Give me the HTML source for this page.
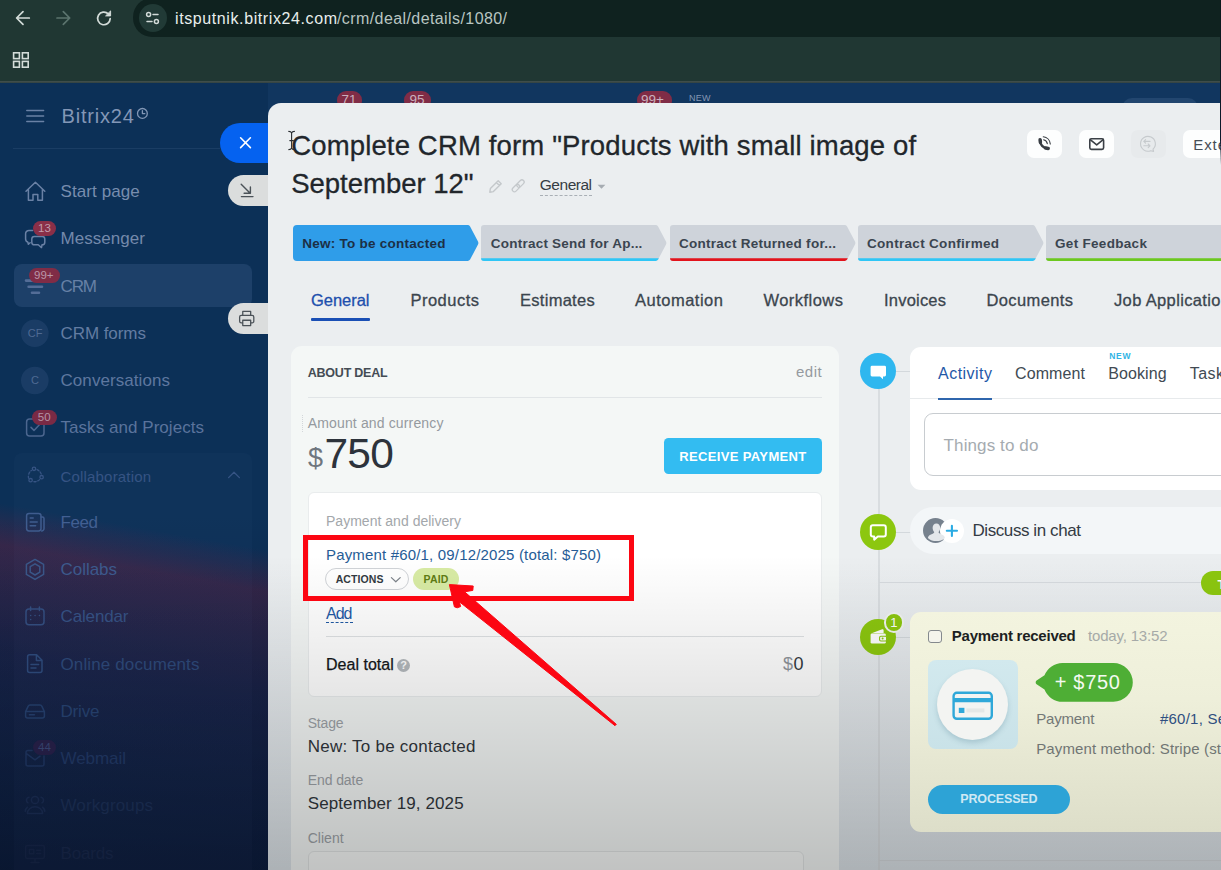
<!DOCTYPE html>
<html lang="en">
<head>
<meta charset="utf-8">
<title>Deal #1080 - Bitrix24</title>
<style>
*{box-sizing:border-box;margin:0;padding:0}
html,body{width:1221px;height:870px;overflow:hidden;background:#0c3057;font-family:"Liberation Sans",sans-serif}
.abs,.layer,.t,.b{position:absolute}
.layer{left:0;top:0;width:1221px;height:870px;overflow:hidden}
.t{white-space:pre;line-height:1;font-family:"Liberation Sans",sans-serif}
svg{position:absolute;overflow:visible}
/* ---------- browser chrome ---------- */
#chrome{height:83px;background:#203733;z-index:50}
#chrome .edge{left:0;top:81.2px;width:1221px;height:1.8px;background:linear-gradient(180deg,#3f4d4a 0,#3f4d4a 60%,#26383a 100%)}
#url{left:133px;top:-2px;width:1120px;height:39.4px;border-radius:19px;background:#0f221f}
#url .site{left:5.5px;top:6px;width:28px;height:28px;border-radius:14px;background:#213a36}
/* ---------- sidebar ---------- */
#side{top:0;background:#0c3057}
#sidebg{left:0;top:83px;width:268px;height:787px;background:
  linear-gradient(180deg,rgba(13,28,62,0) 55%,rgba(12,24,56,.8) 100%),
  linear-gradient(190deg,rgba(60,36,70,0) 56%,rgba(64,38,72,.85) 61%,rgba(44,32,72,.55) 74%,rgba(20,28,62,0) 98%),
  #0c3057}
#stripbg{left:268px;top:83px;width:953px;height:30px;background:#11365f}
.navact{left:14px;top:264px;width:238px;height:43px;border-radius:8px;background:rgba(120,150,200,.16)}
.navgrp{left:14px;top:453px;width:238px;height:430px;border-radius:8px;background:rgba(120,150,200,.035)}
.sdiv{left:13px;top:147.5px;width:207px;height:1px;background:rgba(130,155,195,.12)}
.badge{height:15px;border-radius:8px;background:#8a2f48}
.lbl{border-radius:16px 0 0 16px}
/* ---------- slider panel ---------- */
#panel{left:268px;top:103.4px;width:953px;height:767px;background:linear-gradient(180deg,#ebeef0 0,#ebeef0 60%,#dde4e9 100%);border-top-left-radius:13px;overflow:hidden}
.hbtn{top:129.9px;width:35px;height:28.5px;border-radius:7px;background:#fdfefe}
.stage{top:225px;height:36px;width:185.5px}
.card{background:#f4f7f6;border-radius:11px}
.inner{background:#fff;border:1px solid #e9eced;border-radius:6px}
.hr{height:1px;background:#e1e5e7}
.pill{border-radius:40px}
.circ{border-radius:50%}
#fade{z-index:40;pointer-events:none;top:83px;height:787px;background:linear-gradient(180deg,rgba(0,0,0,0) 60%,rgba(0,0,0,.22) 100%)}
</style>
</head>
<body>

<!-- ================= page: sidebar ================= -->
<div class="layer" id="side">
  <div class="b" id="sidebg"></div>
  <div class="b" id="stripbg"></div>
  <div class="b sdiv"></div>
  <div class="b navact"></div>
  <div class="b navgrp"></div>
  <svg style="left:0;top:0;width:268px;height:870px" viewBox="0 0 268 870" fill="none" stroke="#6a81a5" stroke-width="1.5" stroke-linecap="round" stroke-linejoin="round">
  <!-- hamburger + clock -->
  <path d="M26.8 110.6h16.8M26.8 116.1h16.8M26.8 121.6h16.8"/>
  <g stroke="#8397b6" stroke-width="1.3"><circle cx="142.4" cy="113.4" r="4.9"/><path d="M142.4 110.6v3h2.4"/></g>
  <!-- home -->
  <path d="M26 191.2l9.4-9 9.4 9M28.4 189.4v10.8h4.6v-5.6h4.8v5.6h4.6v-10.8"/>
  <!-- messenger -->
  <path d="M32.6 230.4h-3.600a3.400 3.400 0 0 0-3.400 3.400v5.200a3.400 3.400 0 0 0 2.300 3.200l.5 2 1.700-1.500"/><path d="M34.400 236.400h7.800a2.600 2.600 0 0 1 2.600 2.600v3.200a2.600 2.600 0 0 1-2.600 2.600h-.2l-.5 2.800-3.300-2.800h-3.800a2.600 2.600 0 0 1-2.600-2.600v-3.200a2.600 2.600 0 0 1 2.600-2.600z"/>
  <!-- CRM funnel -->
  <g stroke-width="2.6" stroke="#546d97"><path d="M26 280.6h18M28.600 286.700h13.400M32 292.800h7"/></g>
  <!-- CF / C circles -->
  <g stroke="none" fill="rgba(120,150,200,.13)"><circle cx="34.800" cy="333.300" r="13.800"/><circle cx="34.800" cy="380.500" r="13.800"/></g>
  <!-- tasks -->
  <g stroke="#4c668f"><rect x="26.600" y="419" width="17.400" height="17" rx="3"/><path d="M31 427.400l3 3 5.600-5.800"/></g>
  <!-- collaboration -->
  <g stroke="#365484" stroke-width="1.300"><circle cx="34" cy="468.800" r="1.700"/><circle cx="41.600" cy="477.200" r="1.700"/><circle cx="30.600" cy="480.200" r="1.700"/><path d="M37 469.600a7.500 7.500 0 0 1 4.400 5M39.600 479.600a7.500 7.500 0 0 1-6.600 2M28.600 478.200a7.500 7.500 0 0 1 2.800-7.800" stroke-dasharray="2.200 1.800"/></g>
  <!-- feed -->
  <g stroke="#3f5c8e"><rect x="26.600" y="513.400" width="14.400" height="17.600" rx="2.400"/><path d="M41 517h1.400a1.600 1.600 0 0 1 1.600 1.600v10a2.400 2.400 0 0 1-2.400 2.400M30.200 518h3M30.200 522h7M30.200 525.800h5.400"/></g>
  <!-- collabs -->
  <g stroke="#3a5789"><path d="M35 559.400l8.600 5v10l-8.600 5-8.600-5v-10z"/><path d="M35 563.800l4.800 2.800v5.600l-4.800 2.800-4.800-2.800v-5.600z"/></g>
  <!-- calendar -->
  <g stroke="#344f81"><rect x="26" y="609" width="18" height="15.800" rx="3"/><path d="M30.600 607v3.400M39.400 607v3.400M30.600 615.400h.1M35 615.400h.1M39.400 615.400h.1M30.600 619.400h.1" /></g>
  <!-- online docs -->
  <g stroke="#2f4c7e"><path d="M29.600 654.800h7l5.400 5.400v10.400a2 2 0 0 1-2 2H29.600a2 2 0 0 1-2-2v-13.800a2 2 0 0 1 2-2zM36.400 655v5.400h5.400M31 664.400h7.600M31 668h5"/></g>
  <!-- drive -->
  <g stroke="#264170"><path d="M25.600 711.600l2.600-5.400a2 2 0 0 1 1.800-1.200h10a2 2 0 0 1 1.800 1.200l2.600 5.400v4.400a2 2 0 0 1-2 2H27.600a2 2 0 0 1-2-2zM25.800 711.600h18.400M29.400 714.800h5"/></g>
  <!-- webmail -->
  <g stroke="#203764"><path d="M32 750.400h-4a2 2 0 0 0-2 2v11.600a2 2 0 0 0 2 2h14a2 2 0 0 0 2-2v-8M26.400 753.600l8.600 6.200 5-3.600"/></g>
  <!-- workgroups -->
  <g stroke="#1b2e56"><circle cx="35" cy="800" r="3.600"/><path d="M27.400 813.400a7.600 6.600 0 0 1 15.200 0zM41 797.200a3 3 0 0 1 1 5.600M44.800 811.400a6 6 0 0 0-2.200-4.200M29 797.200a3 3 0 0 0-1 5.600M25.200 811.400a6 6 0 0 1 2.200-4.200"/></g>
  <!-- boards -->
  <g stroke="#17274b"><rect x="25.600" y="845.600" width="18.800" height="12.800" rx="1.600"/><path d="M35 858.400v3.600M31 862.600h8M29.400 849.400h4.400v4.400h-4.400zM36.600 850.200h4M36.600 853.400h4"/></g>
  <!-- collaboration chevron -->
  <path d="M228.600 477.600l5.400-5.400 5.400 5.400" stroke="#365484" stroke-width="1.300"/>
</svg>

  <div class="b badge" style="left:32.5px;top:220.7px;width:23.5px;height:15.6px"></div>
  <div class="b badge" style="left:29.3px;top:267.8px;width:30.5px;height:15.2px;background:#802c46"></div>
  <div class="b badge" style="left:31.6px;top:410.3px;width:25.4px;height:15px;background:#7a2a45"></div>
  <div class="b badge" style="left:32.5px;top:740px;width:23.5px;background:#28214c"></div>
  <span class="t" style="left:61.5px;top:106.1px;font-size:20px;color:#8397b6;letter-spacing:0.80px;">Bitrix24</span>
<span class="t" style="left:60.5px;top:183.0px;font-size:17px;color:#788dae;letter-spacing:0.09px;">Start page</span>
<span class="t" style="left:60.5px;top:230.0px;font-size:17px;color:#7489ab;letter-spacing:0.05px;">Messenger</span>
<span class="t" style="left:60.5px;top:277.5px;font-size:17px;color:#6780a6;letter-spacing:-1.11px;">CRM</span>
<span class="t" style="left:60.5px;top:325.0px;font-size:17px;color:#637ca2;letter-spacing:-0.06px;">CRM forms</span>
<span class="t" style="left:60.5px;top:372.0px;font-size:17px;color:#5e779f;letter-spacing:0.07px;">Conversations</span>
<span class="t" style="left:60.5px;top:419.0px;font-size:17px;color:#5a739c;letter-spacing:0.05px;">Tasks and Projects</span>
<span class="t" style="left:60.5px;top:468.7px;font-size:15px;color:#365484;letter-spacing:0.18px;">Collaboration</span>
<span class="t" style="left:60.5px;top:514.0px;font-size:17px;color:#425f92;letter-spacing:-0.42px;">Feed</span>
<span class="t" style="left:60.5px;top:561.0px;font-size:17px;color:#3d5a8d;letter-spacing:-0.03px;">Collabs</span>
<span class="t" style="left:60.5px;top:608.0px;font-size:17px;color:#365285;letter-spacing:-0.14px;">Calendar</span>
<span class="t" style="left:60.5px;top:655.5px;font-size:17px;color:#2e4a7b;letter-spacing:0.13px;">Online documents</span>
<span class="t" style="left:60.5px;top:703.0px;font-size:17px;color:#284474;letter-spacing:-0.17px;">Drive</span>
<span class="t" style="left:60.5px;top:750.0px;font-size:17px;color:#223a68;letter-spacing:-0.05px;">Webmail</span>
<span class="t" style="left:60.5px;top:797.0px;font-size:17px;color:#1d3159;letter-spacing:0.13px;">Workgroups</span>
<span class="t" style="left:60.5px;top:845.0px;font-size:17px;color:#19294e;letter-spacing:-0.17px;">Boards</span>
<span class="t" style="left:38.1px;top:223.3px;font-size:11.5px;color:#c39dac;">13</span>
<span class="t" style="left:34.0px;top:269.9px;font-size:11.5px;color:#bb97a8;">99+</span>
<span class="t" style="left:37.8px;top:411.9px;font-size:11.5px;color:#b592a5;">50</span>
<span class="t" style="left:38.0px;top:741.9px;font-size:11.5px;color:#3c4a7a;">44</span>
<span class="t" style="left:27.8px;top:328.0px;font-size:11px;color:#4f6a93;">CF</span>
<span class="t" style="left:30.9px;top:375.2px;font-size:11px;color:#4f6a93;">C</span>
  <!-- strip behind the slider -->
  <div class="b badge" style="left:337px;top:91.4px;width:24.5px;height:19px;border-radius:9px;background:#802c46"></div>
  <div class="b badge" style="left:404px;top:91.4px;width:27px;height:19px;border-radius:9px;background:#802c46"></div>
  <div class="b badge" style="left:636.7px;top:91.4px;width:35px;height:19px;border-radius:9px;background:#802c46"></div>
  <div class="b" style="left:1122px;top:97.7px;width:76px;height:30px;border-radius:10px;background:#22466f"></div>
  <span class="t" style="left:341.6px;top:93.4px;font-size:13.5px;color:#cbb0bd;">71</span>
<span class="t" style="left:409.6px;top:93.4px;font-size:13.5px;color:#cbb0bd;">95</span>
<span class="t" style="left:641.0px;top:93.4px;font-size:13.5px;color:#cbb0bd;">99+</span>
<span class="t" style="left:689.0px;top:94.4px;font-size:9px;color:#8497b4;letter-spacing:0.25px;">NEW</span>
  <!-- slider labels -->
  <div class="b lbl" style="left:219.6px;top:123px;width:60px;height:39.8px;border-radius:20px 0 0 20px;background:#0562f0"></div>
  <div class="b lbl" style="left:227.5px;top:174.7px;width:50px;height:31.2px;background:#dbdddd"></div>
  <div class="b lbl" style="left:227.5px;top:302.9px;width:50px;height:31px;background:#dbdddd"></div>
  <svg style="left:0;top:0;width:268px;height:400px" viewBox="0 0 268 400" fill="none" stroke-linecap="round" stroke-linejoin="round">
  <path d="M240.6 137.8l9.8 9.8M250.4 137.8l-9.8 9.8" stroke="#fff" stroke-width="1.6"/>
  <g stroke="#4b5258" stroke-width="1.4">
    <path d="M241.2 184.2l9 9M250.4 187v6.3h-6.3M241.4 196.6h11.6"/>
    <g transform="translate(246.9 318.5) scale(.92) translate(-246.7 -318.500)"><path d="M242.2 315.2v-4.4h8.6v4.4M242.2 323.2h-1.6a1.8 1.8 0 0 1-1.8-1.8v-4.4a1.8 1.8 0 0 1 1.8-1.8h11.8a1.8 1.8 0 0 1 1.8 1.8v4.4a1.8 1.8 0 0 1-1.8 1.8h-1.6M242.2 320.4h8.6v5.8h-8.6z"/></g>
  </g>
</svg>

</div>

<!-- ================= slider panel ================= -->
<div class="layer" id="panelwrap">
<div class="b" id="panel"></div>
<!-- header buttons -->
<div class="b hbtn" style="left:1027.2px"></div>
<div class="b hbtn" style="left:1079px"></div>
<div class="b hbtn" style="left:1130.5px;background:#e7eaec"></div>
<div class="b hbtn" style="left:1182.8px;width:60px"></div>
<!-- stage bar -->
<svg class="stage" style="left:292.5px" viewBox="0 0 185.5 36"><path d="M4 0H174.5a3 3 0 0 1 2.6 1.4L185 16.6a3 3 0 0 1 0 2.8L177.1 34.6a3 3 0 0 1-2.6 1.4H4a4 4 0 0 1-4-4V4a4 4 0 0 1 4-4z" fill="#2f9de9"/></svg>
<svg class="stage" style="left:481px" viewBox="0 0 185.5 36"><path d="M3 0H174.5a3 3 0 0 1 2.6 1.4L185 16.6a3 3 0 0 1 0 2.8L177.1 34.6a3 3 0 0 1-2.6 1.4H3a3 3 0 0 1-3-3V3a3 3 0 0 1 3-3z" fill="#ced3da"/><path d="M0 33.3H177.8L177.1 34.6a3 3 0 0 1-2.6 1.4H3a3 3 0 0 1-3-3z" fill="#2fc6f6"/></svg>
<svg class="stage" style="left:669.5px" viewBox="0 0 185.5 36"><path d="M3 0H174.5a3 3 0 0 1 2.6 1.4L185 16.6a3 3 0 0 1 0 2.8L177.1 34.6a3 3 0 0 1-2.6 1.4H3a3 3 0 0 1-3-3V3a3 3 0 0 1 3-3z" fill="#ced3da"/><path d="M0 33.3H177.8L177.1 34.6a3 3 0 0 1-2.6 1.4H3a3 3 0 0 1-3-3z" fill="#e2131c"/></svg>
<svg class="stage" style="left:858px" viewBox="0 0 185.5 36"><path d="M3 0H174.5a3 3 0 0 1 2.6 1.4L185 16.6a3 3 0 0 1 0 2.8L177.1 34.6a3 3 0 0 1-2.6 1.4H3a3 3 0 0 1-3-3V3a3 3 0 0 1 3-3z" fill="#ced3da"/><path d="M0 33.3H177.8L177.1 34.6a3 3 0 0 1-2.6 1.4H3a3 3 0 0 1-3-3z" fill="#2fc6f6"/></svg>
<svg class="stage" style="left:1046.2px" viewBox="0 0 185.5 36"><path d="M3 0H174.5a3 3 0 0 1 2.6 1.4L185 16.6a3 3 0 0 1 0 2.8L177.1 34.6a3 3 0 0 1-2.6 1.4H3a3 3 0 0 1-3-3V3a3 3 0 0 1 3-3z" fill="#ced3da"/><path d="M0 33.3H177.8L177.1 34.6a3 3 0 0 1-2.6 1.4H3a3 3 0 0 1-3-3z" fill="#6cc81f"/></svg>
<!-- tab underline -->
<div class="b" style="left:311px;top:318.3px;width:59px;height:2.7px;background:#1a4fb5;border-radius:1px"></div>
<div class="b" style="left:540.4px;top:195px;width:52px;height:0;border-top:1px dashed #a9afb5"></div>
<!-- left card -->
<div class="b card" style="left:291px;top:346px;width:548px;height:560px"></div>
<div class="b" style="left:301.5px;top:415px;width:0;height:17px;border-left:1px dotted #d3d7da"></div>
<div class="b hr" style="left:307.5px;top:397px;width:514.5px"></div>
<div class="b" style="left:664px;top:438.3px;width:158.2px;height:36px;border-radius:4.500px;background:#33bcf1"></div>
<div class="b inner" style="left:308px;top:492.3px;width:514px;height:204.7px"></div>
<div class="b pill" style="left:325.4px;top:568px;width:84px;height:21.7px;background:#fff;border:1px solid #d0d3d7"></div>
<div class="b pill" style="left:413.2px;top:568px;width:45.4px;height:21.7px;background:#d8eba4"></div>
<div class="b" style="left:326px;top:622px;width:26.5px;height:0;border-top:1px dashed #1f5aa5"></div>
<div class="b hr" style="left:326px;top:636px;width:478px;background:#dfe2e4"></div>
<div class="b circ" style="left:397px;top:659px;width:13px;height:13px;background:#b4b9bd"></div>
<div class="b inner" style="left:308px;top:851px;width:496px;height:60px;background:#f8faf9;border-color:#e3e6e6"></div>
<!-- right column timeline -->
<div class="b" style="left:878.2px;top:380px;width:1.6px;height:500px;background:#d9dde0"></div>
<div class="b" style="left:896px;top:371.4px;width:15px;height:1px;background:#d3d8dc"></div>
<div class="b" style="left:896px;top:531.6px;width:15px;height:1px;background:#d3d8dc"></div>
<div class="b" style="left:896px;top:636.5px;width:15px;height:1px;background:#d3d8dc"></div>
<div class="b" style="left:879px;top:581.5px;width:350px;height:1px;background:#d6dade"></div>
<div class="b" style="left:879px;top:859.5px;width:350px;height:1px;background:#d6dade"></div>
<div class="b circ" style="left:860.1px;top:353px;width:36.4px;height:36.4px;background:#2fb7ef"></div>
<div class="b circ" style="left:860.1px;top:513.5px;width:36.4px;height:36.4px;background:#8cc70f"></div>
<div class="b circ" style="left:860.1px;top:618.6px;width:36.4px;height:36.4px;background:#8cc70f"></div>
<div class="b circ" style="left:883.6px;top:612.4px;width:20.4px;height:20.4px;background:#8cc70f;border:2px solid #f1f4f1"></div>
<!-- activity card -->
<div class="b" style="left:910.2px;top:346.7px;width:330px;height:143px;border-radius:11px;background:#fff"></div>
<div class="b hr" style="left:910.2px;top:397.5px;width:330px;background:#e7eaec"></div>
<div class="b" style="left:938px;top:397.6px;width:54px;height:2px;background:#2f66ad"></div>
<div class="b" style="left:923.5px;top:412.9px;width:330px;height:63.2px;border-radius:9px;border:1px solid #c8ccd0;background:#fff"></div>
<!-- chat pill -->
<div class="b" style="left:910.2px;top:507.3px;width:340px;height:47px;border-radius:23.5px;background:#f3f6f8"></div>
<div class="b circ" style="left:923.3px;top:518px;width:25px;height:25px;background:#76818d"></div>
<div class="b circ" style="left:939.8px;top:518.5px;width:24.2px;height:24.2px;background:#fff"></div>
<div class="b" style="left:1201px;top:571.4px;width:60px;height:24px;border-radius:12px;background:#8cc70f"></div>

<span class="t" style="left:291.2px;top:131.5px;font-size:27.5px;color:#21262b;letter-spacing:0.15px;-webkit-text-stroke:0.3px #21262b;">Complete CRM form "Products with small image of</span>
<span class="t" style="left:291.2px;top:169.8px;font-size:27.5px;color:#21262b;letter-spacing:-0.01px;-webkit-text-stroke:0.3px #21262b;">September 12"</span>
<span class="t" style="left:539.8px;top:177.4px;font-size:15.5px;color:#353c43;letter-spacing:-0.48px;">General</span>
<span class="t" style="left:1193.3px;top:137.1px;font-size:15px;color:#474e56;letter-spacing:0.89px;">Exte</span>
<span class="t" style="left:302.3px;top:237.3px;font-size:13.5px;color:#1c2f45;font-weight:700;letter-spacing:0.25px;">New: To be contacted</span>
<span class="t" style="left:490.8px;top:237.3px;font-size:13.5px;color:#3b4550;font-weight:700;letter-spacing:0.23px;">Contract Send for Ap...</span>
<span class="t" style="left:679.0px;top:237.3px;font-size:13.5px;color:#3b4550;font-weight:700;letter-spacing:0.27px;">Contract Returned for...</span>
<span class="t" style="left:867.0px;top:237.3px;font-size:13.5px;color:#3b4550;font-weight:700;letter-spacing:0.31px;">Contract Confirmed</span>
<span class="t" style="left:1055.0px;top:237.3px;font-size:13.5px;color:#3b4550;font-weight:700;letter-spacing:0.31px;">Get Feedback</span>
<span class="t" style="left:311.0px;top:292.0px;font-size:16.5px;color:#1d4fad;letter-spacing:-0.03px;-webkit-text-stroke:0.3px currentColor;">General</span>
<span class="t" style="left:410.5px;top:292.0px;font-size:16.5px;color:#3b454e;letter-spacing:0.48px;-webkit-text-stroke:0.3px currentColor;">Products</span>
<span class="t" style="left:520.0px;top:292.0px;font-size:16.5px;color:#3b454e;letter-spacing:0.28px;-webkit-text-stroke:0.3px currentColor;">Estimates</span>
<span class="t" style="left:635.0px;top:292.0px;font-size:16.5px;color:#3b454e;letter-spacing:0.50px;-webkit-text-stroke:0.3px currentColor;">Automation</span>
<span class="t" style="left:763.5px;top:292.0px;font-size:16.5px;color:#3b454e;letter-spacing:0.46px;-webkit-text-stroke:0.3px currentColor;">Workflows</span>
<span class="t" style="left:884.0px;top:292.0px;font-size:16.5px;color:#3b454e;letter-spacing:0.21px;-webkit-text-stroke:0.3px currentColor;">Invoices</span>
<span class="t" style="left:986.5px;top:292.0px;font-size:16.5px;color:#3b454e;letter-spacing:0.38px;-webkit-text-stroke:0.3px currentColor;">Documents</span>
<span class="t" style="left:1114.0px;top:292.0px;font-size:16.5px;color:#3b454e;letter-spacing:0.36px;-webkit-text-stroke:0.3px currentColor;">Job Application</span>
<span class="t" style="left:307.8px;top:366.6px;font-size:12.5px;color:#444c54;font-weight:700;letter-spacing:-0.24px;">ABOUT DEAL</span>
<span class="t" style="left:795.9px;top:364.2px;font-size:15px;color:#959a9f;letter-spacing:0.54px;">edit</span>
<span class="t" style="left:307.8px;top:416.1px;font-size:14px;color:#959a9f;letter-spacing:0.14px;">Amount and currency</span>
<span class="t" style="left:308.0px;top:445.1px;font-size:27px;color:#6f767e;">$</span>
<span class="t" style="left:324.5px;top:432.7px;font-size:42.5px;color:#2d333b;letter-spacing:-0.81px;">750</span>
<span class="t" style="left:679.2px;top:450.1px;font-size:13px;color:#ffffff;font-weight:700;letter-spacing:0.36px;">RECEIVE PAYMENT</span>
<span class="t" style="left:326.0px;top:513.8px;font-size:14px;color:#a3a7ab;letter-spacing:0.02px;">Payment and delivery</span>
<span class="t" style="left:326.0px;top:546.6px;font-size:15px;color:#265c96;letter-spacing:0.17px;">Payment #60/1, 09/12/2025 (total: $750)</span>
<span class="t" style="left:335.7px;top:574.0px;font-size:10.5px;color:#333a41;font-weight:700;letter-spacing:0.09px;">ACTIONS</span>
<span class="t" style="left:423.5px;top:574.0px;font-size:10.5px;color:#5f7c14;font-weight:700;letter-spacing:0.16px;">PAID</span>
<span class="t" style="left:326.0px;top:606.2px;font-size:16px;color:#1f5aa5;letter-spacing:-0.98px;">Add</span>
<span class="t" style="left:326.0px;top:656.5px;font-size:16px;color:#14171a;letter-spacing:0.02px;-webkit-text-stroke:0.25px #14171a;">Deal total</span>
<span class="t" style="left:783.0px;top:654.8px;font-size:18px;color:#8f959b;">$</span>
<span class="t" style="left:793.5px;top:654.8px;font-size:18px;color:#333a41;">0</span>
<span class="t" style="left:400.3px;top:660.1px;font-size:11px;color:#ffffff;font-weight:700;">?</span>
<span class="t" style="left:307.7px;top:715.6px;font-size:14px;color:#9da2a7;letter-spacing:-0.17px;">Stage</span>
<span class="t" style="left:307.7px;top:737.7px;font-size:17px;color:#30363c;letter-spacing:0.24px;">New: To be contacted</span>
<span class="t" style="left:307.7px;top:773.4px;font-size:14px;color:#9da2a7;letter-spacing:-0.08px;">End date</span>
<span class="t" style="left:307.7px;top:794.7px;font-size:17px;color:#30363c;letter-spacing:0.11px;">September 19, 2025</span>
<span class="t" style="left:307.7px;top:830.6px;font-size:14px;color:#9da2a7;letter-spacing:0.02px;">Client</span>
<span class="t" style="left:938.1px;top:366.0px;font-size:16px;color:#1f58a8;letter-spacing:0.45px;">Activity</span>
<span class="t" style="left:1015.0px;top:366.0px;font-size:16px;color:#414a53;letter-spacing:0.09px;">Comment</span>
<span class="t" style="left:1108.3px;top:366.0px;font-size:16px;color:#414a53;letter-spacing:0.08px;">Booking</span>
<span class="t" style="left:1189.7px;top:366.0px;font-size:16px;color:#414a53;letter-spacing:0.46px;">Task</span>
<span class="t" style="left:1109.2px;top:351.6px;font-size:8.5px;color:#31b5e5;font-weight:700;letter-spacing:0.73px;">NEW</span>
<span class="t" style="left:943.6px;top:436.5px;font-size:17px;color:#a5abb0;letter-spacing:0.11px;">Things to do</span>
<span class="t" style="left:972.5px;top:522.1px;font-size:17px;color:#333b44;letter-spacing:-0.42px;">Discuss in chat</span>
<span class="t" style="left:1217.5px;top:577.5px;font-size:13px;color:#ffffff;font-weight:700;">T</span>
<span class="t" style="left:890.3px;top:616.2px;font-size:13px;color:#ffffff;">1</span>
<svg style="left:0;top:0;width:1221px;height:870px" viewBox="0 0 1221 870" fill="none" stroke-linecap="round" stroke-linejoin="round">
  <!-- text cursor (I-beam) -->
  <path d="M288.800 131.400q2.200 0 2.800 1.600q.6-1.600 2.800-1.600M291.600 133v14.600M288.800 149.600q2.200 0 2.800-1.600q.6 1.600 2.800 1.600M289.800 140.600h3.600" stroke="#2a2e32" stroke-width="1.100"/>
  <!-- pencil + link -->
  <g stroke="#c4c8cb" stroke-width="1.400">
    <path d="M498.200 180.800l3 3-7.800 7.800-3.600.6.600-3.600zM496.400 182.600l3 3"/>
    <g transform="rotate(-45 518.2 185.8)" stroke-width="1.25"><rect x="510.7" y="183.6" width="8.6" height="4.4" rx="2.2"/><rect x="517.1" y="183.6" width="8.6" height="4.4" rx="2.2"/></g>
  </g>
  <path d="M597.600 184.800h7.800l-3.900 3.900z" fill="#a6acb2"/>
  <!-- phone -->
  <g stroke="#383d43" fill="none">
    <path d="M1040.300 140.500c-.500 4 3 7.700 7.200 7.900" stroke-width="2.300"/>
    <path d="M1040.100 139.700l.300 2.500M1045.700 148.100l2.500.300" stroke-width="3.500"/>
    <path d="M1043.300 136.800a8 8 0 0 1 7 7.200M1043.600 139.800a4.700 4.700 0 0 1 3.700 3.900" stroke-width="1.150"/>
  </g>
  <!-- mail -->
  <g stroke="#3b4046" stroke-width="1.600"><rect x="1089.800" y="138.800" width="13.800" height="10.600" rx="1.600"/><path d="M1090.200 139.600l6.500 5.300 6.500-5.300"/></g>
  <!-- dim chat -->
  <g stroke="#c6cacd" stroke-width="1.100" transform="translate(-1.200 -.400)"><path d="M1154.200 149.600a7.400 7.400 0 1 0-2.400 1.500l3 .700z"/><path d="M1145 141.800h6.200M1146.800 140l-1.800 1.800 1.800 1.800M1151.200 146.200h-6.200M1149.400 144.400l1.800 1.800-1.800 1.800"/></g>
  <!-- ACTIONS chevron -->
  <path d="M391.400 577.600l4.400 4.200 4.400-4.200" stroke="#7d838a" stroke-width="1.200"/>
  <!-- timeline icons -->
  <path d="M872 365.800h12.600a1.400 1.400 0 0 1 1.400 1.400v7.800a1.400 1.400 0 0 1-1.400 1.400h-1.600v2.800l-3-2.800h-8a1.400 1.400 0 0 1-1.400-1.400v-7.800a1.400 1.400 0 0 1 1.400-1.400z" fill="#fff"/>
  <path d="M872.8 525.2h11a2 2 0 0 1 2 2v7.400a2 2 0 0 1-2 2h-6l-3.600 3.100v-3.100h-1.400a2 2 0 0 1-2-2v-7.400a2 2 0 0 1 2-2z" stroke="#fff" stroke-width="2"/>
  <g><path d="M871.6 633.2l10.6-3.9a1 1 0 0 1 1.4.9v3z" fill="#fff"/><rect x="870.6" y="633.4" width="15.2" height="10.2" rx="1.4" fill="#fff"/><rect x="879.6" y="636.2" width="7" height="4.8" rx="1.2" fill="#fff" stroke="#8cc70f" stroke-width="1.1"/><circle cx="882.6" cy="638.6" r="1" fill="#8cc70f"/></g>
  <!-- avatar + plus -->
  <g transform="translate(936.4 530.8) scale(1.22) translate(-933.600 -530.600)"><path d="M933.600 524.600c1.900 0 3.100 1.500 3.100 3.600c0 1.500-.6 2.800-1.300 3.400c0 .7.300 1 1.200 1.400c2 .8 3.800 1.600 4 3.400a10.600 10.600 0 0 1-14 0c.2-1.800 2-2.600 4-3.400c.9-.4 1.200-.7 1.200-1.400c-.7-.6-1.300-1.900-1.300-3.400c0-2.100 1.200-3.600 3.100-3.600z" fill="#e4e7ea"/></g>
  <path d="M946.800 530.800h10.200M951.900 525.700v10.200" stroke="#2aabe3" stroke-width="2.100"/>
</svg>

</div>

<div class="layer" id="fade"></div>
<div class="layer" id="cardlayer" style="z-index:42">
<!-- payment card (drawn above the fade, own shading) -->
<div class="b" style="left:910.2px;top:612.2px;width:340px;height:219.5px;border-radius:11px;background:linear-gradient(180deg,#f3f4df 0,#eeefda 40%,#dddec9 100%)"></div>
<div class="b" style="left:928px;top:629.8px;width:14px;height:13.6px;border:1.4px solid #84898d;border-radius:3px;background:#f4f4ec"></div>
<div class="b" style="left:927.8px;top:659.8px;width:90px;height:89.2px;border-radius:8px;background:linear-gradient(180deg,#d2e9ee,#c9e2e8)"></div>
<div class="b circ" style="left:937px;top:669.1px;width:71.4px;height:71.4px;background:#f3f4f2;box-shadow:0 3px 5px rgba(70,120,140,.25)"></div>
<svg style="left:1035px;top:662.5px;width:98px;height:38.8px" viewBox="0 0 98 38.8"><path d="M27.4 0H78.4a19.4 19.4 0 0 1 0 38.8H27.4A19.4 19.4 0 0 1 9.5 26.5L1.6 21.2a2.2 2.2 0 0 1 0-3.6L9.5 12.3A19.4 19.4 0 0 1 27.4 0z" fill="#4eae35"/></svg>
<div class="b" style="left:927.8px;top:784.6px;width:142px;height:29.4px;border-radius:14.7px;background:#2da3d6"></div>
<svg style="left:0;top:0;width:1221px;height:870px" viewBox="0 0 1221 870" fill="none">
  <g stroke="#2fa8d9" stroke-width="2.4" stroke-linejoin="miter"><rect x="953.6" y="692.8" width="38.2" height="26" rx="3.2"/><path d="M953.6 700.2h38.2" stroke-width="4.2" stroke-linecap="butt"/></g>
  <rect x="958.8" y="707.800" width="5.600" height="5.200" fill="#2fa8d9"/>
  <rect x="966.4" y="708.400" width="18" height="4" fill="#e4e8e7"/>
</svg>

<span class="t" style="left:951.8px;top:628.3px;font-size:15px;color:#1c1f22;font-weight:700;letter-spacing:-0.24px;">Payment received</span>
<span class="t" style="left:1088.0px;top:628.3px;font-size:15px;color:#a6aaa8;letter-spacing:-0.18px;">today, 13:52</span>
<span class="t" style="left:1054.7px;top:671.5px;font-size:20px;color:#f4faf1;letter-spacing:0.71px;">+ $750</span>
<span class="t" style="left:1036.2px;top:711.3px;font-size:15px;color:#737876;letter-spacing:-0.18px;">Payment</span>
<span class="t" style="left:1160.0px;top:711.3px;font-size:15px;color:#2f4f80;letter-spacing:0.22px;">#60/1, Se</span>
<span class="t" style="left:1036.2px;top:740.5px;font-size:15px;color:#707573;letter-spacing:0.12px;">Payment method: Stripe (str</span>
<span class="t" style="left:960.3px;top:793.4px;font-size:12.5px;color:#cfe9f4;font-weight:700;letter-spacing:-0.16px;">PROCESSED</span>
</div>
<div class="layer" id="anno" style="z-index:45">
<div class="b" style="left:303.3px;top:535px;width:330.7px;height:65.8px;border:5px solid #fc0612"></div>
<svg style="left:0;top:0;width:1221px;height:870px" viewBox="0 0 1221 870"><path d="M449.400 584.600L473.200 586L472.800 590.400L464.600 591.800L616.300 724.300L615 725.700L459.400 601.800L460.600 606.600L457.200 607.800L454.400 606.800Z" fill="#fc0612" stroke="#fc0612" stroke-width="1" stroke-linejoin="round"/></svg>

</div>

<!-- ================= browser chrome ================= -->
<div class="layer" id="chrome">
  <div class="b" id="url"><div class="b site"></div></div>
  <div class="b edge"></div>
  <svg style="left:0;top:0;width:200px;height:83px" viewBox="0 0 200 83" fill="none" stroke-linecap="round" stroke-linejoin="round">
  <g stroke="#d3dcd9" stroke-width="1.7">
    <path d="M29.3 18H17.2M23 11.6L16.6 18l6.4 6.4"/>
    <path d="M110.2 18.6a6.3 6.3 0 1 1-1.9-4.7"/>
    <path d="M110.6 11.3v4.6h-4.6z" fill="#d3dcd9" stroke-width="1"/>
    <g stroke-width="1.5"><circle cx="148.6" cy="14.6" r="2"/><path d="M153 14.6h5"/><circle cx="156.4" cy="21.6" r="2"/><path d="M147 21.6h5"/></g>
    <g stroke-width="1.6" stroke-linejoin="miter"><rect x="13.6" y="52.8" width="5.8" height="5.8"/><rect x="22.4" y="52.8" width="5.8" height="5.8"/><rect x="13.6" y="61.4" width="5.8" height="5.8"/><rect x="22.4" y="61.4" width="5.8" height="5.8"/></g>
  </g>
  <path d="M57 18h12.1M63.3 11.6l6.4 6.4-6.4 6.4" stroke="#5b746e" stroke-width="1.7"/>
</svg>

  <span class="t" style="left:175.0px;top:10.5px;font-size:16px;color:#e8eeec;letter-spacing:0.60px;">itsputnik.bitrix24.com</span>
<span class="t" style="left:337.0px;top:10.5px;font-size:16px;color:#b9c6c2;letter-spacing:0.41px;">/crm/deal/details/1080/</span>
</div>
<div class="b" style="left:1220px;top:0;width:1px;height:165px;background:linear-gradient(180deg,#0c1a1c 0,#0c1a2c 85%,rgba(12,26,44,0) 100%);z-index:60"></div>
</body>
</html>
